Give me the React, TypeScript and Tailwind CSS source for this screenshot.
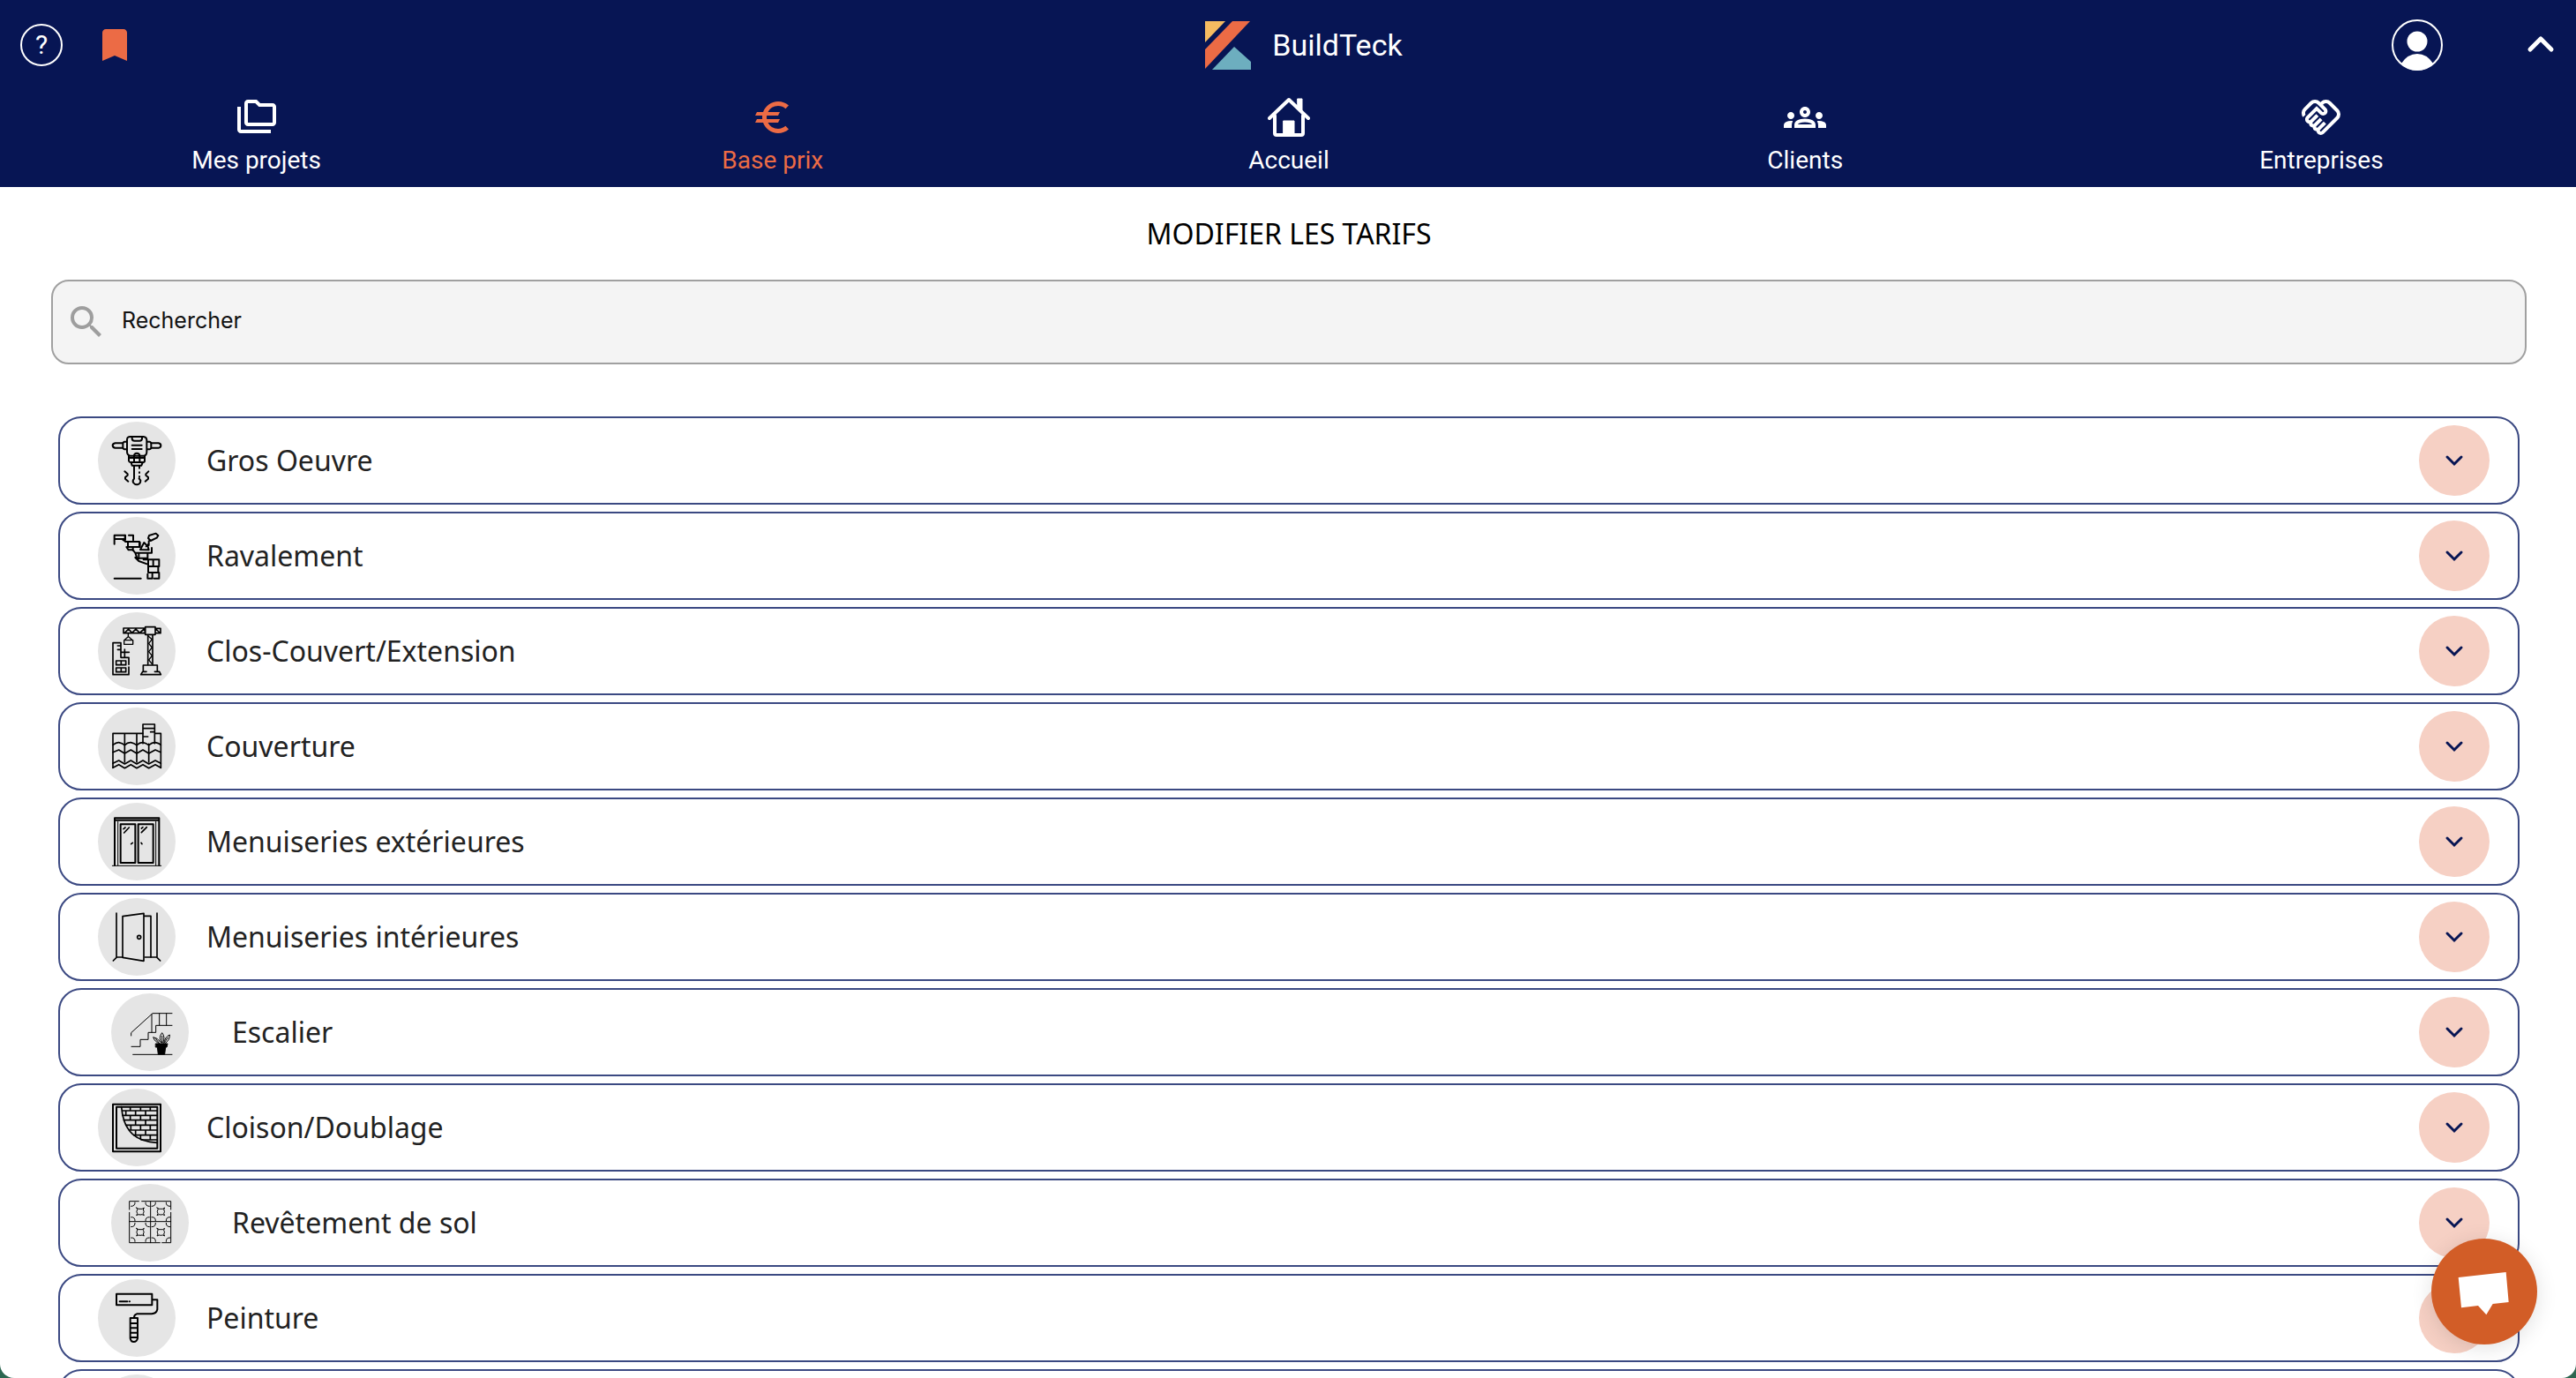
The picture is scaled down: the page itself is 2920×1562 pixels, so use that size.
import type { ReactNode } from "react";
import {
  MdBookmark,
  MdEuro,
  MdOutlineFolderCopy,
  MdOutlineGroups,
  MdOutlineHandshake,
  MdSearch,
} from "react-icons/md";

function Glyph({ box, width = 6, children }: { box: string; width?: number; children: ReactNode }) {
  return (
    <svg
      viewBox={box}
      className="size-[88px]"
      fill="none"
      stroke="#000"
      strokeWidth={width}
      strokeLinecap="round"
      strokeLinejoin="round"
      aria-hidden="true"
    >
      {children}
    </svg>
  );
}

function JackhammerIcon() {
  return (
    <Glyph box="33 22 264 264">
      <path d="M134 76Q138 73 143 73H188Q198 74 199 84V124Q199 136 190 138H143Q132 136 132 124V84Q132 79 134 76Z" />
      <path d="M149 75V80Q150 87 157 87H175Q182 87 183 80V75" />
      <path d="M149 102H182M149 115H182" />
      <path d="M130 90H123Q118 91 118 98V108Q118 115 123 116H130M116 95H92Q83 97 83 103Q84 110 92 111H116" />
      <path d="M202 90H209Q214 91 214 98V108Q214 115 209 116H202M216 95H239Q247 97 247 103Q247 110 239 111H216" />
      <path d="M138 138V155Q139 160 144 160H187Q192 160 192 155V138M138 145H192M156 158V137Q157 129 165 129Q174 129 175 137V158" />
      <path d="M146 161L149 171H181L185 161M156 173V216Q150 222 153 229Q159 237 167 236Q178 233 178 222L173 215M174 173V180M174 194V196M174 208V210" />
      <path d="M124 191L134 200V204L126 211V216L136 225M205 191L196 200V204L204 211V216L194 225" />
    </Glyph>
  );
}

function BrickTrowelIcon() {
  return (
    <Glyph box="33 346 264 264">
      <path d="M89 438V408H125V421H92M126 408V424H118L128 430M138 408H153V425M126 430H174V448M135 431V448H176V432M130 448L137 458H152L158 466M152 448V460" />
      <path d="M204 418L207 409L230 402L238 409L233 417L212 427ZM206 428V442M190 433L177 457L206 458L203 447ZM197 446L205 438" />
      <path d="M216 451V468H160L166 486H202V470M172 470V488M160 484L172 496L200 506M188 491H241V514H204V493M221 493V513M204 514V535H241M204 535H238V516M218 535V555M202 540V555H215M224 555H241V536" />
      <path d="M89 555H179" />
    </Glyph>
  );
}

function CraneIcon() {
  return (
    <Glyph box="33 26 264 264" width={5}>
      <path d="M120 80H193V97H120ZM124 96L137 83L149 96L162 83L175 96L190 83" />
      <path d="M194 76H228V102H194ZM229 81H246V97H229M230 83L243 95" />
      <path d="M203 104V204M219 104V204" />
      <path d="M204 107L217 118L206 132L217 146L206 160L217 174L206 188L217 202" strokeWidth={4} />
      <path d="M187 228V206H235V228M179 238L185 228H198M226 228H242L247 238H179" />
      <path d="M136 98V109L124 120M137 109L149 120M122 121H152V135H122Z" strokeWidth={4} />
      <path d="M84 238V130H111V180H138V204M84 238H138V212M100 140H111M100 153H111M112 162H139M124 152V178" />
      <path d="M95 191H128V205H95ZM112 191V205M95 215H128V229H95ZM112 215V229" />
    </Glyph>
  );
}

function RoofTilesIcon() {
  return (
    <Glyph box="33 350 264 264" width={5}>
      <path d="M84 555V438H186M228 438H247V555M124 438V536M165 438V536M206 474V536" />
      <path d="M186 472V407H226V472M187 421H225M212 433H224M188 449H203" />
      <path d="M84 477Q96 468 104 469Q116 471 124 478Q134 468 145 469Q156 471 165 478Q176 468 186 469Q197 471 206 478Q218 468 228 469Q240 471 247 477" />
      <path d="M84 502L104 494L124 506L145 494L165 506L186 494L206 506L228 494L247 502M84 540L104 530L124 542L145 530L165 542L186 530L206 542L228 530L247 540M84 555L104 544L124 556L145 544L165 556L186 544L206 556L228 544L247 555" />
    </Glyph>
  );
}

function WindowIcon() {
  return (
    <Glyph box="33 28 264 264">
      <path d="M90 240V80H241V240M91 87H240" />
      <path d="M82 242H248M101 92V240M230 92V240" strokeWidth={3} />
      <path d="M110 101H160V232H110ZM170 101H221V232H170Z" />
      <path d="M120 117L126 112M122 130L139 112M181 115L186 111M181 129L199 111M146 168L151 164M180 164L183 168" strokeWidth={5} />
    </Glyph>
  );
}

function DoorIcon() {
  return (
    <Glyph box="33 352 264 264" width={5}>
      <path d="M96 403V553H117M234 403V553H193M96 554L85 565M234 554L245 565" />
      <path d="M117 414L189 404V566L117 554ZM191 413H213V553" />
      <circle cx="173" cy="485" r="6" />
    </Glyph>
  );
}

function StairsIcon() {
  return (
    <Glyph box="32 15 264 264" width={3}>
      <path d="M100 159V149L173 83H239M170 86V147M196 84V123M220 84V123M239 124H184V148H158V172H131V196H101M106 223H239" />
      <path d="M184 186H224L221 198H217L214 222H192L189 198H184Z" fill="#000" />
      <path d="M196 185Q180 180 175 164Q190 166 199 180M202 183Q192 165 205 149Q217 163 208 183M211 184Q215 163 231 156Q232 174 215 185M196 185L184 170M205 183V160M213 183L224 166" />
    </Glyph>
  );
}

function PartitionIcon() {
  return (
    <Glyph box="-12 340 264 264" width={5}>
      <path d="M39 393H201V554H39ZM51 402H190V543H51Z" strokeWidth={6} />
      <path d="M68 402C71 448 84 474 106 495Q136 522 190 524" />
      <path d="M71 415H190M72 431H190M76 447H190M83 464H190M94 481H190M110 498H190M135 514H190M98 403V414M133 403V414M166 403V414M83 416V430M116 416V430M150 416V430M98 432V446M133 432V446M166 432V446M116 448V463M150 448V463M100 465V480M133 465V480M166 465V480M116 482V497M150 482V497M133 499V512M166 499V513" />
    </Glyph>
  );
}

function TileMotif({ x, y }: { x: number; y: number }) {
  return (
    <g transform={`translate(${x} ${y})`}>
      <path d="M-13 -13Q-6 -7 0 -9Q6 -7 13 -13L10 -7Q15 0 10 7L13 13Q6 8 0 11Q-6 8 -13 13L-10 7Q-15 0 -10 -7Z" />
      <path d="M-31 -18Q-17 -18 -18 -31M31 -18Q17 -18 18 -31M-31 19Q-17 18 -18 32M31 19Q17 18 18 32" />
    </g>
  );
}

function FloorTilesIcon() {
  return (
    <Glyph box="77 35 264 264" width={3}>
      <path d="M171 94H139V122M181 94H280V122M139 132V235H243M280 132V235H250M211 95V235M139 163H280" />
      <TileMotif x={176} y={129} />
      <TileMotif x={246} y={129} />
      <TileMotif x={176} y={199} />
      <TileMotif x={246} y={199} />
    </Glyph>
  );
}

function RollerIcon() {
  return (
    <Glyph box="33 359 264 264">
      <path d="M96 409H217V447H96Z" />
      <path d="M107 435H133M140 435H141M219 429H235V462Q232 476 216 477H165Q156 480 156 489" />
      <path d="M143 491H168V560Q165 572 155 572Q145 572 143 560ZM144 509H167M144 525H167M144 541H167M144 557H167" />
    </Glyph>
  );
}

function HomeIcon() {
  return (
    <svg viewBox="0 0 48 48" className="size-12" fill="none" stroke="currentColor" strokeLinecap="round" strokeLinejoin="round" aria-hidden="true">
      <path d="M2 25L24 4L46 25" strokeWidth="4" />
      <path d="M8 22V42Q8 44 10 44H38Q40 44 40 42V22" strokeWidth="4" />
      <path d="M34 3H39V18L34 13Z" fill="currentColor" strokeWidth="1" />
      <path d="M18 28H30V43H18Z" fill="currentColor" strokeWidth="1" />
    </svg>
  );
}

function Logo() {
  return (
    <svg viewBox="0 0 52 55" className="h-[55px] w-[52px]" aria-hidden="true">
      <path d="M0 0H23L0 24Z" fill="#f5bb61" />
      <path d="M31 0H51L0 54V32Z" fill="#ec6b45" />
      <path d="M33 29L52 46V55H8Z" fill="#6daebf" />
    </svg>
  );
}

const navItems = [
  { label: "Mes projets", icon: <MdOutlineFolderCopy className="size-12" /> },
  { label: "Base prix", icon: <MdEuro className="size-12" />, active: true },
  { label: "Accueil", icon: <HomeIcon /> },
  { label: "Clients", icon: <MdOutlineGroups className="size-12" /> },
  { label: "Entreprises", icon: <MdOutlineHandshake className="size-12" /> },
];

const categories: { label: string; icon?: ReactNode; nested?: boolean }[] = [
  { label: "Gros Oeuvre", icon: <JackhammerIcon /> },
  { label: "Ravalement", icon: <BrickTrowelIcon /> },
  { label: "Clos-Couvert/Extension", icon: <CraneIcon /> },
  { label: "Couverture", icon: <RoofTilesIcon /> },
  { label: "Menuiseries extérieures", icon: <WindowIcon /> },
  { label: "Menuiseries intérieures", icon: <DoorIcon /> },
  { label: "Escalier", icon: <StairsIcon />, nested: true },
  { label: "Cloison/Doublage", icon: <PartitionIcon /> },
  { label: "Revêtement de sol", icon: <FloorTilesIcon />, nested: true },
  { label: "Peinture", icon: <RollerIcon /> },
  { label: "" },
];

function Header() {
  return (
    <header className="shrink-0 overflow-hidden bg-[#071554] pb-[13px] font-['Roboto',sans-serif] text-white">
      <div className="grid h-[102px] grid-cols-[1fr_auto_1fr] items-center">
        <div className="flex items-center gap-[35px] pl-[23px]">
          <button aria-label="Aide" className="flex size-12 items-center justify-center rounded-full border-2 border-white text-[30px] leading-none">
            ?
          </button>
          <button aria-label="Favoris" className="text-[#ec6b45]">
            <MdBookmark className="size-12" />
          </button>
        </div>
        <div className="flex items-center gap-6 pl-9">
          <Logo />
          <span className="text-[34px] leading-10">BuildTeck</span>
        </div>
        <div className="flex items-center justify-end gap-[95px] pr-6">
          <button aria-label="Profil">
            <svg viewBox="0 0 58 58" className="size-[58px]" aria-hidden="true">
              <circle cx="29" cy="29" r="28" fill="none" stroke="#fff" strokeWidth="2" />
              <circle cx="29" cy="25" r="11.5" fill="#fff" />
              <path d="M11 50Q18 39 29 39Q40 39 47 50Q39 58 29 58Q19 58 11 50Z" fill="#fff" />
            </svg>
          </button>
          <button aria-label="Replier le menu">
            <svg viewBox="0 0 32 32" className="size-8" fill="none" stroke="#fff" strokeWidth="5" strokeLinecap="round" strokeLinejoin="round" aria-hidden="true">
              <path d="M4 21L16 9L28 21" />
            </svg>
          </button>
        </div>
      </div>
      <nav className="-mr-1 -ml-0.5 grid grid-cols-5 pt-[7px]">
        {navItems.map((item) => (
          <a key={item.label} href="#" className={item.active ? "flex flex-col items-center gap-[7px] text-[#ec6b45]" : "flex flex-col items-center gap-[7px]"}>
            {item.icon}
            <span className="text-[28px] leading-[35px]">{item.label}</span>
          </a>
        ))}
      </nav>
    </header>
  );
}

function CategoryRow({ label, icon, nested }: { label: string; icon?: ReactNode; nested?: boolean }) {
  return (
    <li className="flex h-[100px] shrink-0 items-center justify-between rounded-[26px] border-2 border-[#3b4982] pr-8 pl-[43px]">
      <div className={nested ? "flex items-center gap-[49px] pl-[15px]" : "flex items-center gap-[35px]"}>
        <span className="flex size-[88px] items-center justify-center rounded-full bg-[#e5e5e5]">{icon}</span>
        <span className="text-[32px] leading-10 text-[#222]">{label}</span>
      </div>
      <button aria-label={`Ouvrir ${label}`} className="flex size-20 items-center justify-center rounded-full bg-[#f6d0c4]">
        <svg viewBox="0 0 24 24" className="size-6" fill="none" stroke="#071554" strokeWidth="3" strokeLinecap="round" aria-hidden="true">
          <path d="M4 8L12 16L20 8" />
        </svg>
      </button>
    </li>
  );
}

export default function App() {
  return (
    <div className="h-screen bg-[#2c6650]">
      <div className="flex h-full flex-col overflow-hidden rounded-b-[16px] bg-white font-['Noto_Sans',sans-serif]">
        <Header />
        <main className="flex min-h-0 flex-1 flex-col overflow-hidden pt-[33px] pr-14 pl-[58px]">
          <h1 className="text-center text-[32px] leading-10 text-black">MODIFIER LES TARIFS</h1>
          <label className="mt-8 flex h-24 shrink-0 items-center rounded-[20px] border-2 border-[#a0a0a0] bg-[#f4f4f4] pl-[14px]">
            <MdSearch className="size-12 text-[#9e9e9e]" aria-hidden="true" />
            <input
              type="text"
              aria-label="Rechercher"
              placeholder="Rechercher"
              className="ml-4 flex-1 bg-transparent pb-1 font-['Inter',sans-serif] text-[25px] leading-10 outline-none placeholder:text-[#111]"
            />
          </label>
          <ul className="mx-2 mt-[59px] flex flex-col gap-2">
            {categories.map((category) => (
              <CategoryRow key={category.label} {...category} />
            ))}
          </ul>
        </main>
      </div>
      <button
        aria-label="Ouvrir la discussion"
        className="fixed right-11 bottom-[38px] flex size-[120px] items-center justify-center rounded-full bg-[#d25d27] shadow-[0_4px_24px_rgba(0,0,0,0.12)]"
      >
        <svg viewBox="0 0 360 360" className="size-full" aria-hidden="true">
          <path d="M92 132L254 114L263 216L209 222L187 259L159 228L102 235Z" fill="#fff" />
        </svg>
      </button>
    </div>
  );
}
